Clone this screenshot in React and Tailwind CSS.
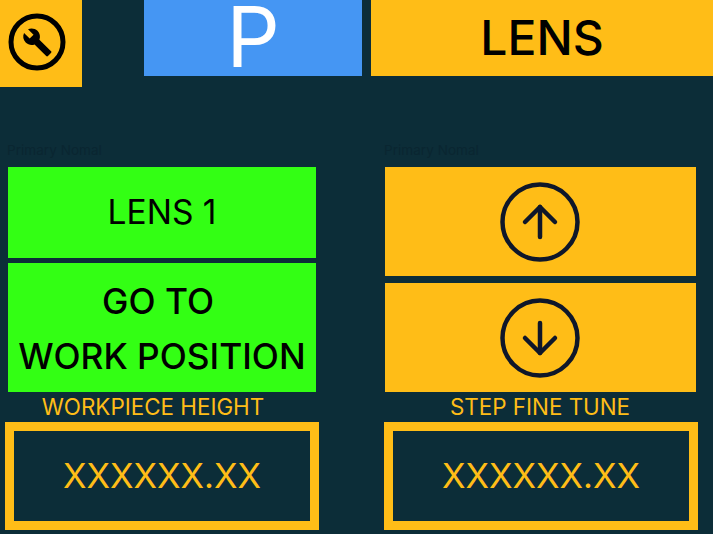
import { CircleArrowUp, CircleArrowDown } from "lucide-react";

const ValueBox = ({ label, labelWidth }) => (
  <>
    <div className={`${labelWidth} h-[30px] flex items-center justify-center text-[22.4px] text-[#ffbd17]`}>
      {label}
    </div>
    <div className="w-[314px] h-[108px] border-[9px] border-[#ffbd17] flex items-center justify-center text-[34.5px] text-[#ffbd17]">
      XXXXXX.XX
    </div>
  </>
);

const FieldLabel = () => (
  <div className="h-5 mb-[7px] text-[13.6px] leading-5 text-[#0a2631]">Primary Nomal</div>
);

const App = () => {
  return (
    <div className="w-[713px] h-[534px] overflow-hidden bg-[#0c2d38] font-['Inter',sans-serif]">
      <div className="flex items-start h-[87px]">
        <button className="w-[82px] h-[87px] bg-[#ffbd17] flex items-center justify-center">
          <svg width="58" height="58" viewBox="0 0 58 58" className="-ml-[8px] -mt-[3px]">
            <circle cx="29" cy="29" r="26" fill="none" stroke="#000" strokeWidth="5" />
            <g transform="translate(14 14) scale(1.28)">
              <path d="M22.7 19l-9.1-9.1c.9-2.3.4-5-1.5-6.9-2-2-5-2.4-7.4-1.3L9 6 6 9 1.6 4.7C.4 7.1.9 10.1 2.9 12.1c1.9 1.9 4.6 2.4 6.9 1.5l9.1 9.1c.4.4 1 .4 1.4 0l2.3-2.3c.5-.4.5-1.1.1-1.4z" />
            </g>
          </svg>
        </button>
        <div className="ml-[62px] w-[218px] h-[76px] bg-[#4596f3] flex items-center justify-center text-[84px] font-normal leading-[74px] pb-[2px] text-white">
          P
        </div>
        <div className="ml-[9px] flex-1 h-[76px] bg-[#ffbd17] flex items-center justify-center text-[48px] font-medium text-black">
          LENS
        </div>
      </div>

      <div className="flex items-start">
        <div className="ml-[5px] pt-[53px] w-[314px]">
          <div className="pl-[2px]">
            <FieldLabel />
            <button className="ml-px w-[308px] h-[91px] bg-[#33ff14] flex items-center justify-center text-[33.5px] text-black">
              LENS 1
            </button>
            <button className="ml-px mt-[5px] w-[308px] h-[129px] bg-[#33ff14] flex flex-col items-center justify-center text-[35.3px] font-medium leading-[55px] pt-[3px] text-black">
              <span className="pr-[8px]">GO TO</span>
              <span>WORK POSITION</span>
            </button>
          </div>
          <ValueBox label="WORKPIECE HEIGHT" labelWidth="w-[296px]" />
        </div>

        <div className="ml-[65px] pt-[53px] w-[314px]">
          <FieldLabel />
          <button className="ml-px pr-px w-[311px] h-[109px] bg-[#ffbd17] flex items-center justify-center">
            <CircleArrowUp size={90} strokeWidth={1.2} color="#0f172a" />
          </button>
          <button className="ml-px pr-px mt-[7px] w-[311px] h-[109px] bg-[#ffbd17] flex items-center justify-center">
            <CircleArrowDown size={90} strokeWidth={1.2} color="#0f172a" />
          </button>
          <ValueBox label="STEP FINE TUNE" labelWidth="w-[312px]" />
        </div>
      </div>
    </div>
  );
};

export default App;
